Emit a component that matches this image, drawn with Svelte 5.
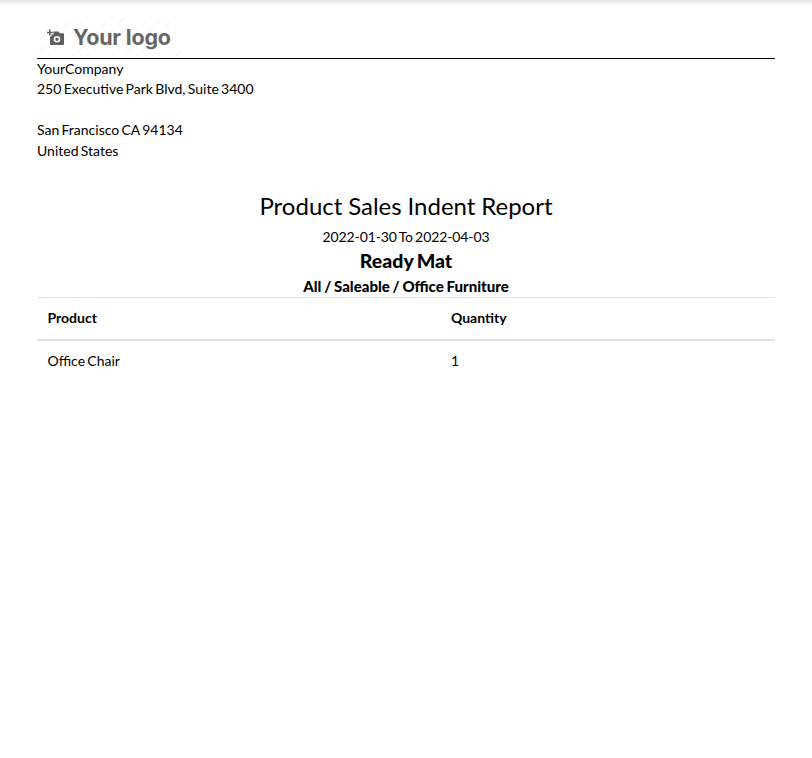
<script>
  const rows = [{ name: 'Office Chair', qty: 1 }];
</script>

<div class="shadow"></div>
<div class="page">
  <div class="header">
    <div class="logo">
      <svg class="cam" viewBox="0 0 18 16" width="18" height="16" aria-hidden="true">
        <path d="M2 0.5h1.6v2.2h2.2v1.6H3.6v2.2H2V4.3H0V2.7h2z" fill="#5f5f5f"/>
        <path fill-rule="evenodd" fill="#5f5f5f" d="M6.5 2.5h5l1.2 1.7h3.3a1 1 0 0 1 1 1V15a1 1 0 0 1-1 1H4a1 1 0 0 1-1-1V7.5h1.5V5.6H6.5zM10 6.9a3.3 3.3 0 1 0 0 6.6 3.3 3.3 0 0 0 0-6.6zM10 8.5a1.7 1.7 0 1 1 0 3.4 1.7 1.7 0 0 1 0-3.4z"/>
      </svg>
      <span class="logotext">Your logo</span>
    </div>
  </div>
  <div class="address">
    <div>YourCompany</div>
    <div>250 Executive Park Blvd, Suite 3400</div>
    <div class="blank"></div>
    <div>San Francisco CA 94134</div>
    <div>United States</div>
  </div>
  <div class="titles">
    <h1>Product Sales Indent Report</h1>
    <div class="dates">2022-01-30 To 2022-04-03</div>
    <div class="cat">Ready Mat</div>
    <div class="sub">All / Saleable / Office Furniture</div>
  </div>
  <table>
    <thead>
      <tr><th>Product</th><th>Quantity</th></tr>
    </thead>
    <tbody>
      {#each rows as r}
        <tr><td>{r.name}</td><td class="qty">{r.qty}</td></tr>
      {/each}
    </tbody>
  </table>
</div>

<style>
  :global(body) {
    margin: 0;
    background: #fff;
    color: #000;
    font-family: Lato, "Liberation Sans", sans-serif;
    font-size: 14px;
    word-spacing: -1.3px;
  }
  .shadow {
    height: 6px;
    background: linear-gradient(#e6e6e6, #fff);
  }
  .page {
    padding: 0 37px;
    height: 752px;
    box-sizing: border-box;
  }
  .header {
    padding-top: 11px;
    height: 41px;
    border-bottom: 1px solid #000;
    box-sizing: content-box;
  }
  .logo {
    width: 144px;
    height: 40px;
    display: flex;
    align-items: center;
    gap: 8px;
    padding-left: 10px;
    box-sizing: border-box;
    background: repeating-linear-gradient(135deg, #fff 0 8px, #f8f8f8 8px 9px);
  }
  .cam { flex: none; }
  .logotext {
    font-family: Inter, sans-serif;
    font-weight: 700;
    font-size: 21.5px;
    letter-spacing: -0.2px;
    word-spacing: 0;
    color: #666;
  }
  .address { line-height: 20.4px; }
  .blank { height: 20.4px; }
  .titles { text-align: center; margin-top: 28px; }
  h1 { margin: 0; font-size: 24px; font-weight: 400; line-height: 34px; word-spacing: -0.3px; }
  .dates { line-height: 20px; margin-top: 4px; letter-spacing: -0.1px; }
  .cat { font-size: 19.5px; font-weight: 900; line-height: 28px; }
  .sub { font-size: 15px; font-weight: 900; line-height: 23px; margin-bottom: -1px; word-spacing: -0.8px; }
  table { width: 100%; border-collapse: collapse; table-layout: fixed; }
  th, td { text-align: left; padding: 10px 10.5px; line-height: 20px; box-sizing: border-box; }
  th:first-child, td:first-child { width: 403.5px; }
  thead tr { border-top: 1px solid #dee2e6; border-bottom: 2px solid #dee2e6; }
  th { font-weight: 700; padding-bottom: 11px; }
</style>
